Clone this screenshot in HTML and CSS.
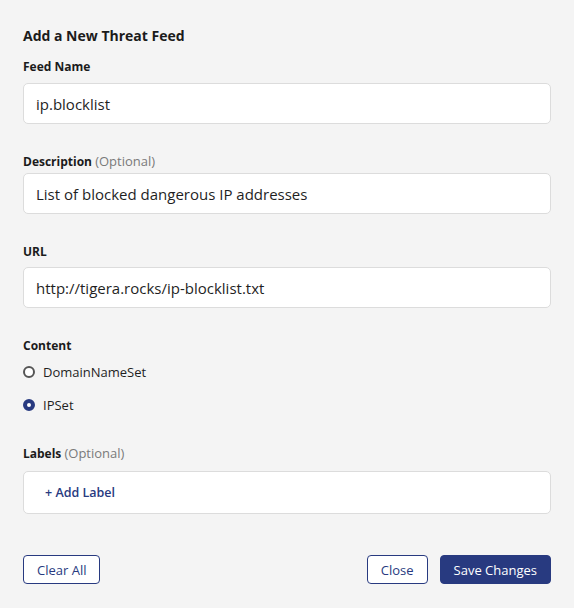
FILE: index.html
```html
<!DOCTYPE html>
<html>
<head>
<meta charset="utf-8">
<link rel="stylesheet" href="styles.css">
</head>
<body>
<div class="panel">
  <h2 class="title">Add a New Threat Feed</h2>

  <div class="label l-name">Feed Name</div>
  <div class="input i-name">ip.blocklist</div>

  <div class="label l-desc">Description <span class="opt">(Optional)</span></div>
  <div class="input i-desc">List of blocked dangerous IP addresses</div>

  <div class="label l-url">URL</div>
  <div class="input i-url">http://tigera.rocks/ip-blocklist.txt</div>

  <div class="label l-content">Content</div>
  <div class="radios">
    <div class="radio"><span class="dot"></span><span>DomainNameSet</span></div>
    <div class="radio checked"><span class="dot"></span><span>IPSet</span></div>
  </div>

  <div class="label l-labels">Labels <span class="opt">(Optional)</span></div>
  <div class="labels-box"><span class="add">+ Add Label</span></div>

  <div class="actions">
    <button class="btn">Clear All</button>
    <div class="right">
      <button class="btn">Close</button>
      <button class="btn primary">Save Changes</button>
    </div>
  </div>
</div>
</body>
</html>
```
FILE: styles.css
```css
html, body {
  margin: 0;
  padding: 0;
  background: #f4f4f4;
}
body {
  font-family: "Open Sans", "Liberation Sans", sans-serif;
  color: #1f1f1f;
}
.panel {
  padding: 0 23px;
  display: flex;
  flex-direction: column;
}
.title {
  margin: 27px 0 0;
  font-size: 14px;
  font-weight: 700;
  line-height: 18px;
  color: #1b1b1b;
}
.label {
  height: 16px;
  font-size: 12px;
  font-weight: 700;
  line-height: 16px;
  color: #1b1b1b;
}
.opt {
  font-size: 13px;
  font-weight: 400;
  color: #7a7a7a;
}
.l-name { margin-top: 14px; }
.l-desc { margin-top: 29px; }
.l-url { margin-top: 30px; }
.l-content { margin-top: 30px; }
.l-labels { margin-top: 30px; }
.input {
  box-sizing: border-box;
  height: 41px;
  background: #fff;
  border: 1px solid #dcdcdc;
  border-radius: 5px;
  padding: 0 12px;
  display: flex;
  align-items: center;
  font-size: 15px;
  color: #1f1f1f;
}
.i-name { margin-top: 8px; }
.i-desc { margin-top: 4px; }
.i-url { margin-top: 7px; }
.radios {
  display: flex;
  flex-direction: column;
  gap: 13px;
  margin-top: 8px;
}
.radio {
  display: flex;
  align-items: center;
  gap: 8px;
  height: 20px;
  font-size: 13px;
  color: #1f1f1f;
}
.dot {
  box-sizing: border-box;
  width: 12px;
  height: 12px;
  border-radius: 50%;
  border: 2px solid #555;
  background: #fff;
}
.radio.checked .dot {
  border: 4px solid #283a80;
  background: #fff;
}
.labels-box {
  box-sizing: border-box;
  margin-top: 10px;
  height: 43px;
  background: #fff;
  border: 1px solid #dcdcdc;
  border-radius: 5px;
  padding: 0 21px;
  display: flex;
  align-items: center;
}
.add {
  font-size: 12.5px;
  font-weight: 600;
  color: #283a80;
}
.actions {
  margin-top: 41px;
  display: flex;
  justify-content: space-between;
}
.right {
  display: flex;
  gap: 12px;
}
.btn {
  box-sizing: border-box;
  height: 29px;
  padding: 0 13px;
  background: #fff;
  border: 1px solid #283a80;
  border-radius: 4px;
  font-family: inherit;
  font-size: 13px;
  color: #283a80;
  cursor: pointer;
}
.btn.primary {
  background: #283a80;
  color: #fff;
}
```
